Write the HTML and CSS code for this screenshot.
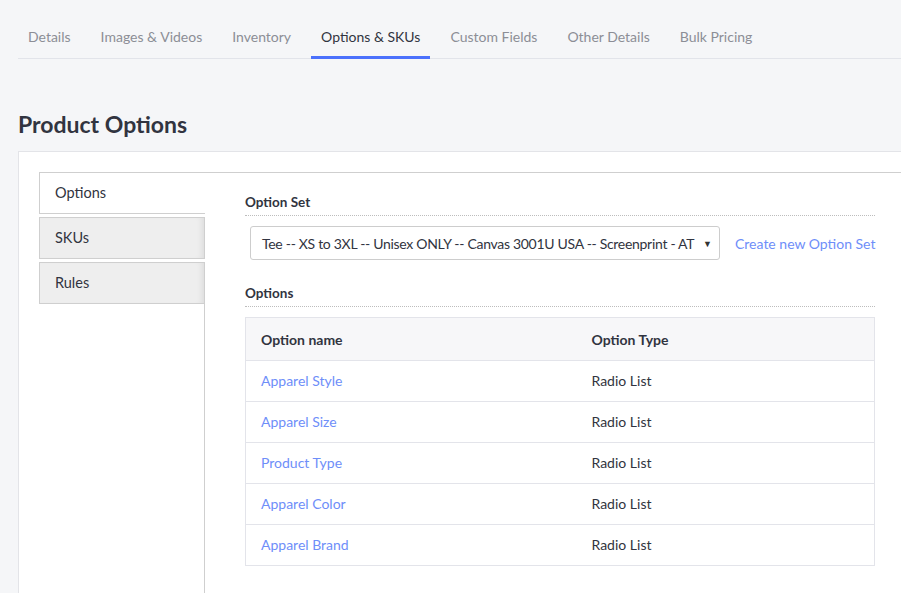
FILE: index.html
```html
<!DOCTYPE html>
<html>
<head>
<meta charset="utf-8">
<link rel="stylesheet" href="styles.css">
</head>
<body>
<nav class="tabs">
  <a class="tab">Details</a>
  <a class="tab">Images &amp; Videos</a>
  <a class="tab">Inventory</a>
  <a class="tab active">Options &amp; SKUs</a>
  <a class="tab">Custom Fields</a>
  <a class="tab">Other Details</a>
  <a class="tab">Bulk Pricing</a>
</nav>
<h1 class="title">Product Options</h1>
<section class="card">
  <div class="side">
    <div class="side-tab current">Options</div>
    <div class="side-tab">SKUs</div>
    <div class="side-tab">Rules</div>
    <div class="side-rest"></div>
  </div>
  <div class="panel">
    <div class="label">Option Set</div>
    <div class="set-row">
      <div class="select"><span class="sel-text">Tee -- XS to 3XL -- Unisex ONLY -- Canvas 3001U USA -- Screenprint - AT</span><span class="arrow">▼</span></div>
      <a class="link">Create new Option Set</a>
    </div>
    <div class="label">Options</div>
    <table class="opts">
      <thead>
        <tr><th class="c1">Option name</th><th>Option Type</th></tr>
      </thead>
      <tbody>
        <tr><td class="c1"><a class="link">Apparel Style</a></td><td>Radio List</td></tr>
        <tr><td class="c1"><a class="link">Apparel Size</a></td><td>Radio List</td></tr>
        <tr><td class="c1"><a class="link">Product Type</a></td><td>Radio List</td></tr>
        <tr><td class="c1"><a class="link">Apparel Color</a></td><td>Radio List</td></tr>
        <tr><td class="c1"><a class="link">Apparel Brand</a></td><td>Radio List</td></tr>
      </tbody>
    </table>
  </div>
</section>
</body>
</html>
```
FILE: styles.css
```css
* { box-sizing: border-box; }
html, body { margin: 0; padding: 0; }
body {
  background: #f5f6f8;
  font-family: "Lato", "Open Sans", sans-serif;
  font-size: 14px;
  color: #313440;
  width: 901px;
  height: 593px;
  overflow: hidden;
}
.tabs {
  display: flex;
  margin-left: 18px;
  padding-top: 20px;
  border-bottom: 1px solid #e2e4ea;
  height: 59px;
}
.tab {
  display: block;
  padding: 8px 10px 0;
  margin-right: 10px;
  height: 39px;
  color: #8c8e96;
  font-size: 14px;
  white-space: nowrap;
  border-bottom: 3px solid transparent;
}
.tab.active {
  color: #313440;
  border-bottom-color: #4b71fc;
}
.title {
  margin: 50px 0 0 18px;
  font-size: 23px;
  font-weight: 700;
  line-height: 30px;
  color: #313440;
  height: 42px;
}
.card {
  display: flex;
  margin-left: 18px;
  background: #fff;
  border: 1px solid #e3e4e8;
  border-right: none;
  padding: 20px 0 0 20px;
  height: 460px;
}
.side {
  width: 166px;
  display: flex;
  flex-direction: column;
  flex-shrink: 0;
}
.side-tab {
  height: 42px;
  padding: 0 15px 1px;
  display: flex;
  align-items: center;
  border: 1px solid #cfcfcf;
  background: #eeeeee;
  margin-bottom: 3px;
  font-size: 14.5px;
  color: #313440;
  box-shadow: inset -6px 0 6px -4px rgba(0,0,0,0.08);
}
.side-tab.current {
  background: #fff;
  border-right: none;
  box-shadow: none;
}
.side-rest {
  flex: 1;
  border-right: 1px solid #cfcfcf;
  margin-top: -3px;
}
.panel {
  flex: 1;
  border-top: 1px solid #cfcfcf;
  padding: 21px 20px 0 41px;
  margin-left: -1px;
}
.label {
  font-weight: 700;
  font-size: 13.5px;
  padding-bottom: 5px;
  border-bottom: 1px dotted #bdbdbd;
  line-height: 16px;
  width: 630px;
}
.set-row {
  display: flex;
  align-items: center;
  padding: 10px 0 0 5px;
  margin-bottom: 25px;
  white-space: nowrap;
}
.select {
  width: 470px;
  height: 34px;
  flex-shrink: 0;
  border: 1px solid #cdcdcd;
  border-radius: 3px;
  display: flex;
  align-items: center;
  justify-content: space-between;
  padding: 0 7px 0 11px;
  font-size: 14px;
  white-space: nowrap;
  overflow: hidden;
  color: #313440;
}
.sel-text { letter-spacing: -0.3px; }
.arrow { font-size: 9px; color: #333; }
.link { color: #6e8ef9; }
.set-row .link { margin-left: 15px; font-size: 14px; white-space: nowrap; }
.opts {
  margin-top: 10px;
  width: 630px;
  border-collapse: collapse;
  border: 1px solid #e3e4ea;
  font-size: 14px;
}
.opts th {
  text-align: left;
  background: #f7f7f9;
  height: 43px;
  padding: 0 15px;
  font-weight: 700;
  border-bottom: 1px solid #e3e4ea;
}
.opts td {
  height: 41px;
  padding: 0 15px 1px;
  border-bottom: 1px solid #e3e4ea;
}
.opts .c1 { width: 331px; }
```
